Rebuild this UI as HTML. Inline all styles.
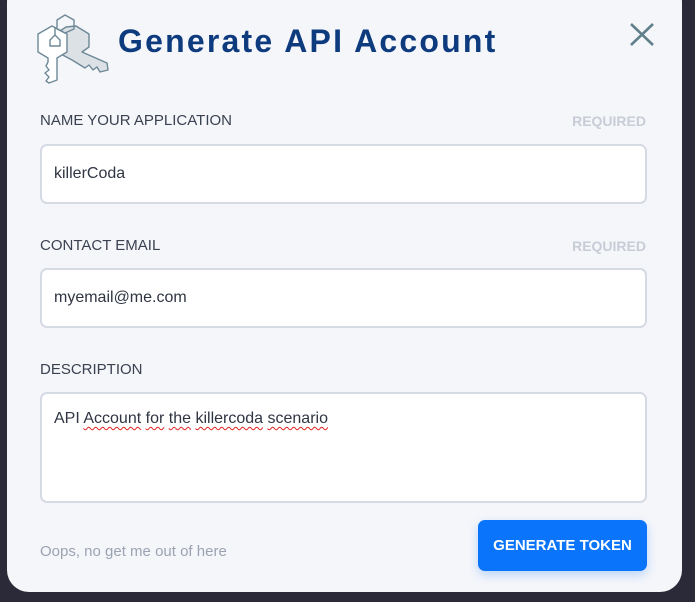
<!DOCTYPE html>
<html><head><style>
*{margin:0;padding:0;box-sizing:border-box}
body{width:695px;height:602px;background:#2b2a38;font-family:"Liberation Sans",sans-serif;position:relative;overflow:hidden}
.card{position:absolute;left:7px;top:-20px;width:675px;height:612px;background:#f5f6fa;border-radius:22px}
.title{position:absolute;left:118px;top:23px;font-size:32px;font-weight:bold;color:#0d3b7e;letter-spacing:2.2px}
.lbl{position:absolute;left:40px;font-size:15px;color:#3a4150}
.req{position:absolute;right:49px;font-size:14px;color:#c7ccd6;font-weight:bold}
.inp{position:absolute;left:40px;width:607px;background:#fff;border:2px solid #d6dae3;border-radius:7px;font-size:16px;color:#2f3542;padding:19px 12px}
.sq{text-decoration:underline wavy #e02020;text-underline-offset:3px;text-decoration-thickness:1px}
.btn{position:absolute;left:478px;top:520px;width:169px;height:51px;background:#0a74fa;border-radius:7px;color:#fff;font-weight:bold;font-size:15px;text-align:center;line-height:51px;box-shadow:0 4px 10px rgba(10,116,250,.25)}
.oops{position:absolute;left:40px;top:543px;font-size:15px;color:#9ba3b2}
</style></head><body>
<div class="card"></div>
<svg style="position:absolute;left:0;top:0" width="115" height="90" viewBox="0 0 115 90">
<g stroke="#6d8896" stroke-width="1.4" stroke-linejoin="round">
<path d="M57 33 L66 27 L76 26 L89 34 L89 47 L82 52 L107 63 L108 70 L100 72 L97 67 L93 70 L89 65 L85 68 L72 60 L57 52 Z" fill="#dce1e6"/>
<path d="M38 34 L52 26 L67 34 L67 52 L57 58 L57 80 L49 83 L46 81 L49 77 L45 73 L49 70 L46 66 L48 62 L48 58 L38 52 Z" fill="#fff"/>
<path d="M57 20 L65 15 L74 20 L74 29 L65 33 L57 29 Z" fill="none"/>
<path d="M50 40 L55 35 L60 40 L60 46 L50 46 Z" fill="#fff"/>
<path d="M55 27 L55 35" fill="none"/>
</g></svg>
<div class="title">Generate API Account</div>
<svg style="position:absolute;left:629px;top:22px" width="26" height="25"><path d="M2 2 L24 23 M24 2 L2 23" stroke="#5f7f8a" stroke-width="2.6"/></svg>
<div class="lbl" style="top:112px">NAME YOUR APPLICATION</div><div class="req" style="top:113px">REQUIRED</div>
<div class="inp" style="top:144px;height:60px">killerCoda</div>
<div class="lbl" style="top:237px">CONTACT EMAIL</div><div class="req" style="top:238px">REQUIRED</div>
<div class="inp" style="top:268px;height:60px">myemail@me.com</div>
<div class="lbl" style="top:361px">DESCRIPTION</div>
<div class="inp" style="top:392px;height:111px;padding-top:16px">API <span class="sq">Account</span> <span class="sq">for</span> <span class="sq">the</span> <span class="sq">killercoda</span> <span class="sq">scenario</span></div>
<div class="oops">Oops, no get me out of here</div>
<div class="btn">GENERATE TOKEN</div>
</body></html>
